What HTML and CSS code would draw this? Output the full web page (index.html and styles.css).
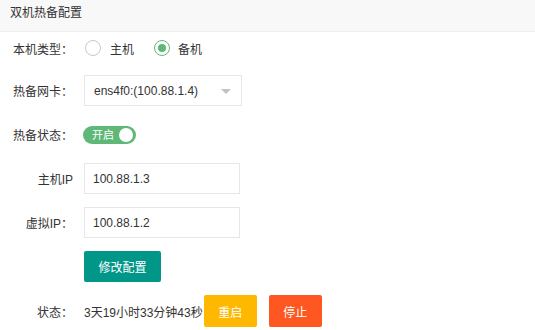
FILE: index.html
```html
<!DOCTYPE html>
<html lang="zh-CN">
<head>
<meta charset="utf-8">
<title>双机热备配置</title>
<link rel="stylesheet" href="styles.css">
</head>
<body>
<div class="panel">
  <div class="panel-header">双机热备配置</div>
  <div class="form">
    <div class="row row-type">
      <span class="label">本机类型：</span>
      <div class="radios">
        <span class="radio"><span class="radio-icon"></span><span class="radio-text">主机</span></span>
        <span class="radio radio-on"><span class="radio-icon"></span><span class="radio-text">备机</span></span>
      </div>
    </div>
    <div class="row">
      <span class="label">热备网卡：</span>
      <div class="select">
        <span class="select-value">ens4f0:(100.88.1.4)</span>
        <span class="select-arrow"></span>
      </div>
    </div>
    <div class="row">
      <span class="label">热备状态：</span>
      <span class="switch"><span class="switch-text">开启</span><span class="switch-knob"></span></span>
    </div>
    <div class="row">
      <span class="label">主机IP</span>
      <input class="input" type="text" value="100.88.1.3">
    </div>
    <div class="row">
      <span class="label">虚拟IP：</span>
      <input class="input" type="text" value="100.88.1.2">
    </div>
    <div class="row">
      <span class="label"></span>
      <button class="btn btn-teal">修改配置</button>
    </div>
    <div class="row row-status">
      <span class="label">状态：</span>
      <span class="status-text">3天19小时33分钟43秒</span>
      <button class="btn btn-warm">重启</button>
      <button class="btn btn-danger">停止</button>
    </div>
  </div>
</div>
</body>
</html>
```

FILE: styles.css
```css
* { box-sizing: border-box; }
html, body { margin: 0; padding: 0; background: #fff; }
body {
  font-family: "Liberation Sans", "Noto Sans CJK SC", sans-serif;
  font-size: 12px;
  color: #333;
}
.panel-header {
  height: 32px;
  line-height: 27px;
  padding-left: 10px;
  background: #f8f8f8;
  border-bottom: 1px solid #eee;
  color: #333;
}
.form {
  display: flex;
  flex-direction: column;
  padding-top: 1px;
}
.row {
  display: flex;
  align-items: center;
  height: 31px;
  margin-top: 13px;
}
.row-type { margin-top: 0; height: 30px; margin-bottom: -1px; }
.row-status { height: 32px; }
.label {
  width: 73px;
  margin-right: 11px;
  text-align: right;
  flex: none;
  white-space: nowrap;
}
.radios { display: flex; align-items: center; }
.radio { display: flex; align-items: center; margin-right: 19px; }
.radio-icon {
  width: 16px;
  height: 16px;
  margin-left: 1px;
  margin-right: 9px;
  border: 1px solid #c9c9c9;
  border-radius: 50%;
  display: flex;
  align-items: center;
  justify-content: center;
}
.radio-on .radio-icon { border-color: #5FB878; margin-right: 8px; }
.radio-on .radio-icon::after {
  content: "";
  width: 8px;
  height: 8px;
  border-radius: 50%;
  background: #5FB878;
}
.select {
  width: 158px;
  height: 31px;
  border: 1px solid #e6e6e6;
  display: flex;
  align-items: center;
  justify-content: space-between;
  padding: 0 10px 0 9px;
  background: #fff;
}
.select-arrow {
  width: 0;
  height: 0;
  border-left: 5px solid transparent;
  border-right: 5px solid transparent;
  border-top: 5px solid #c2c2c2;
  margin-top: 1px;
}
.switch {
  width: 53px;
  height: 18px;
  border-radius: 10px;
  background: #5FB878;
  display: flex;
  align-items: center;
  justify-content: space-between;
  padding: 0 3px 0 9px;
  margin-left: -1px;
}
.switch-text { color: #fff; font-size: 11px; line-height: 18px; }
.switch-knob {
  width: 14px;
  height: 14px;
  border-radius: 50%;
  background: #fff;
}
.input {
  width: 156px;
  height: 31px;
  border: 1px solid #e6e6e6;
  padding: 0 0 0 8px;
  margin: 0;
  font: inherit;
  color: #333;
  outline: none;
}
.btn {
  height: 31px;
  border: none;
  border-radius: 2px;
  color: #fff;
  font: inherit;
  padding: 0;
  margin: 0;
  cursor: pointer;
}
.btn-teal { width: 77px; background: #009688; }
.btn-warm { width: 53px; height: 32px; background: #FFB800; margin-left: 1px; }
.btn-danger { width: 53px; height: 32px; background: #FF5722; margin-left: 12px; }
.status-text { white-space: nowrap; }
```
